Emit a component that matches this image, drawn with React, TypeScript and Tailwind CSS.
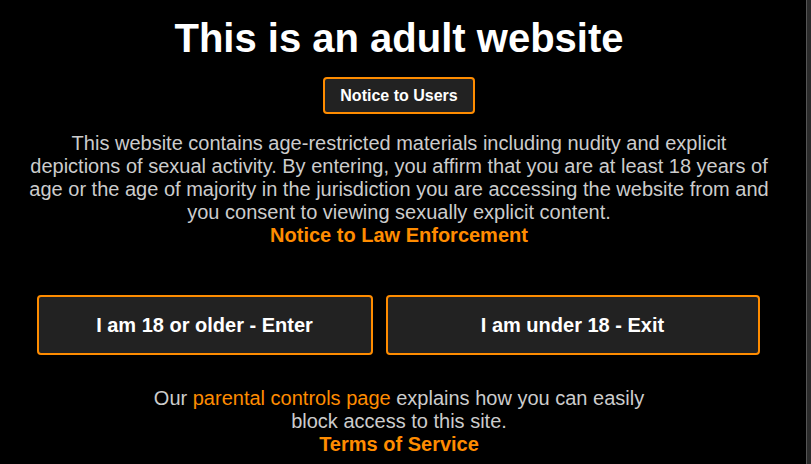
import React from 'react';

const AgeGatePage = () => {
  return (
    <div className="flex h-[464px] w-full bg-black font-['Liberation_Sans',Arial,sans-serif]">
      <div className="flex flex-1 flex-col items-center pr-[8px]">
        <h1 className="mt-[15px] text-[40px] font-bold leading-[46px] text-white">
          This is an adult website
        </h1>
        <button className="mt-[16px] h-[37px] w-[152px] rounded-[4px] border-2 border-[#ff8c00] bg-[#222222] text-[16px] font-bold text-white">
          Notice to Users
        </button>
        <p className="mt-[18px] w-[740px] text-center text-[20px] leading-[23px] text-[#cccccc]">
          This website contains age-restricted materials including nudity and explicit depictions of
          sexual activity. By entering, you affirm that you are at least 18 years of age or the age of
          majority in the jurisdiction you are accessing the website from and you consent to viewing
          sexually explicit content.
        </p>
        <a className="text-[20px] font-bold leading-[23px] text-[#ff8c00]">Notice to Law Enforcement</a>

        <div className="mt-[48px] mr-[2px] flex gap-[13px]">
          <button className="h-[60px] w-[336px] rounded-[4px] border-2 border-[#ff8c00] bg-[#222222] text-[20px] font-bold text-white">
            I am 18 or older - Enter
          </button>
          <button className="h-[60px] w-[374px] rounded-[4px] border-2 border-[#ff8c00] bg-[#222222] text-[20px] font-bold text-white">
            I am under 18 - Exit
          </button>
        </div>

        <p className="mt-[32px] w-[500px] text-center text-[20px] leading-[23px] text-[#cccccc]">
          Our <span className="text-[#ff8c00]">parental controls page</span> explains how you can easily
          block access to this site.
        </p>
        <a className="text-[20px] font-bold leading-[23px] text-[#ff8c00]">Terms of Service</a>
      </div>
      <div className="w-[5px] border-l border-[#555555] bg-[#2b2b2b]" />
    </div>
  );
};

export default function App() {
  return <AgeGatePage />;
}
